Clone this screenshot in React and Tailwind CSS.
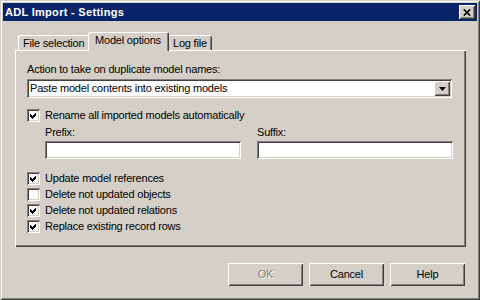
import React from "react";

const raised =
  "shadow-[inset_1px_1px_0_#ffffff,inset_-1px_-1px_0_#404040,inset_2px_2px_0_#d4d0c8,inset_-2px_-2px_0_#808080]";
const sunken =
  "shadow-[inset_1px_1px_0_#808080,inset_-1px_-1px_0_#ffffff,inset_2px_2px_0_#404040,inset_-2px_-2px_0_#d4d0c8]";

function Check({ checked }) {
  return (
    <div className={`w-[13px] h-[13px] shrink-0 bg-white ${sunken} flex items-center justify-center`}>
      {checked && (
        <svg width="9" height="9" viewBox="0 0 9 9" className="block">
          <path d="M1 3 L3 5 L7 1 L7 4 L3 8 L1 6 Z" fill="#000" shapeRendering="crispEdges" />
        </svg>
      )}
    </div>
  );
}

function CheckRow({ checked, label }) {
  return (
    <div className="flex items-center h-[13px]">
      <Check checked={checked} />
      <span className="ml-[5px] leading-[13px] whitespace-nowrap">{label}</span>
    </div>
  );
}

function Button({ children, disabled }) {
  return (
    <div className={`w-[75px] h-[23px] ${raised} flex items-center justify-center`}>
      <span
        className={
          disabled
            ? "text-[#808080] [text-shadow:1px_1px_0_#ffffff]"
            : "text-black"
        }
      >
        {children}
      </span>
    </div>
  );
}

export default function App() {
  return (
    <div className="w-[480px] h-[300px] bg-[#d4d0c8] p-[3px] shadow-[inset_1px_1px_0_#d4d0c8,inset_-1px_-1px_0_#404040,inset_2px_2px_0_#ffffff,inset_-2px_-2px_0_#808080] font-['Liberation_Sans',Arial,sans-serif] text-[11px] tracking-[-0.2px] text-black flex flex-col">
      {/* Title bar */}
      <div className="h-[18px] bg-[#0a246a] flex items-center justify-between pl-[2px] pr-[2px] shrink-0">
        <span className="text-white font-bold text-[11px] tracking-[0.3px] leading-[18px]">ADL Import - Settings</span>
        <div className={`w-[16px] h-[14px] bg-[#d4d0c8] ${raised} flex items-center justify-center`}>
          <svg width="8" height="7" viewBox="0 0 8 7" className="block">
            <path d="M0.8 0.5 L7.2 6.5 M7.2 0.5 L0.8 6.5" stroke="#000" strokeWidth="1.7" fill="none" />
          </svg>
        </div>
      </div>

      {/* Body */}
      <div className="flex-1 px-[12px] flex flex-col">
        {/* Tabs */}
        <div className="mt-[11px] h-[18px] flex items-end pl-[3px] relative z-10">
          <div className="w-[70px] h-[15px] rounded-tl-[2px] shadow-[inset_1px_1px_0_#ffffff] pl-[5px] pt-[2px] leading-[13px] whitespace-nowrap">
            File selection
          </div>
          <div className="w-[81px] h-[19px] -mb-[1px] bg-[#d4d0c8] rounded-tl-[2px] rounded-tr-[2px] shadow-[inset_1px_1px_0_#ffffff,inset_-1px_0_0_#404040,inset_-2px_0_0_#808080] pl-[7px] pt-[2px] leading-[13px] whitespace-nowrap">
            Model options
          </div>
          <div className="w-[43px] h-[15px] rounded-tr-[2px] shadow-[inset_0_1px_0_#ffffff,inset_-1px_0_0_#404040,inset_-2px_0_0_#808080] pl-[4px] pt-[2px] leading-[13px] whitespace-nowrap">
            Log file
          </div>
        </div>

        {/* Panel */}
        <div className="h-[197px] w-[451px] shadow-[inset_1px_1px_0_#ffffff,inset_-1px_-1px_0_#404040,inset_-2px_-2px_0_#808080] pl-[12px] pt-[13px] flex flex-col">
          <div className="h-[13px] leading-[13px] whitespace-nowrap">Action to take on duplicate model names:</div>
          <div className={`mt-[3px] w-[425px] h-[19px] bg-white ${sunken} p-[2px] flex items-center`}>
            <span className="flex-1 pl-[1px] leading-[13px] whitespace-nowrap">Paste model contents into existing models</span>
            <div className={`w-[16px] h-[15px] bg-[#d4d0c8] ${raised} flex items-center justify-center`}>
              <svg width="7" height="4" viewBox="0 0 7 4" className="block">
                <path d="M0 0 H7 L3.5 4 Z" fill="#000" />
              </svg>
            </div>
          </div>

          <div className="mt-[11px]">
            <CheckRow checked label="Rename all imported models automatically" />
          </div>

          <div className="mt-[4px] pl-[18px] flex gap-[16px]">
            <div className="flex flex-col">
              <div className="h-[13px] leading-[13px]">Prefix:</div>
              <div className={`mt-[2px] w-[196px] h-[18px] bg-white ${sunken}`} />
            </div>
            <div className="flex flex-col">
              <div className="h-[13px] leading-[13px]">Suffix:</div>
              <div className={`mt-[2px] w-[196px] h-[18px] bg-white ${sunken}`} />
            </div>
          </div>

          <div className="mt-[13px] flex flex-col gap-[3px]">
            <CheckRow checked label="Update model references" />
            <CheckRow checked={false} label="Delete not updated objects" />
            <CheckRow checked label="Delete not updated relations" />
            <CheckRow checked label="Replace existing record rows" />
          </div>
        </div>

        {/* Buttons */}
        <div className="mt-[16px] flex justify-end gap-[6px]">
          <Button disabled>OK</Button>
          <Button>Cancel</Button>
          <Button>Help</Button>
        </div>
      </div>
    </div>
  );
}
